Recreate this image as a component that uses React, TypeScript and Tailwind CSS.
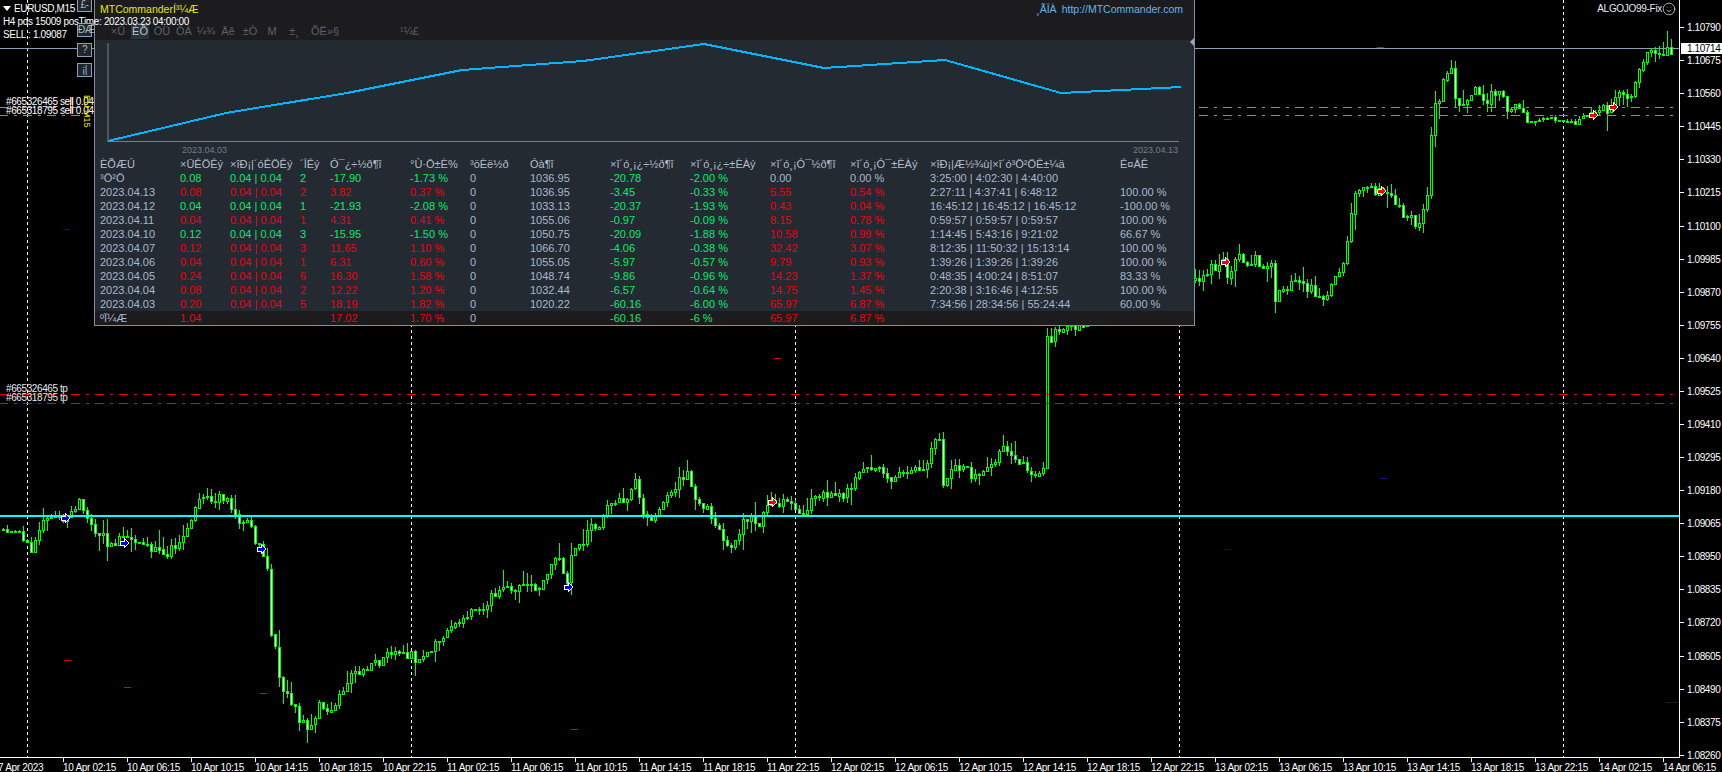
import { Smile } from "lucide-react";

type Row = {
  date: string;
  lots: string;
  minMax: string;
  count: string;
  profit: string;
  pct: string;
  cash: string;
  balance: string;
  loss: string;
  lossPct: string;
  gain: string;
  gainPct: string;
  hold: string;
  win: string;
};

const GREEN = "text-[#0ce86a]";
const RED = "text-[#f0000f]";
const GREY = "text-[#a8b8cf]";

const headers = [
  "ÈÕÆÚ",
  "×ÜÊÖÊý",
  "×îÐ¡|´óÊÖÊý",
  "´ÎÊý",
  "Ó¯¿÷½ð¶î",
  "°Ù·Ö±È%",
  "³öÈë½ð",
  "Óà¶î",
  "×î´ó¸¡¿÷½ð¶î",
  "×î´ó¸¡¿÷±ÈÀý",
  "×î´ó¸¡Ó¯½ð¶î",
  "×î´ó¸¡Ó¯±ÈÀý",
  "×îÐ¡|Æ½¾ù|×î´ó³Ö²ÖÊ±¼ä",
  "Ê¤ÂÊ",
];

const rows: Row[] = [
  { date: "³Ö²Ö", lots: "0.08", minMax: "0.04 | 0.04", count: "2", profit: "-17.90", pct: "-1.73 %", cash: "0", balance: "1036.95", loss: "-20.78", lossPct: "-2.00 %", gain: "0.00", gainPct: "0.00 %", hold: "3:25:00 | 4:02:30 | 4:40:00", win: "" },
  { date: "2023.04.13", lots: "0.08", minMax: "0.04 | 0.04", count: "2", profit: "3.82", pct: "0.37 %", cash: "0", balance: "1036.95", loss: "-3.45", lossPct: "-0.33 %", gain: "5.55", gainPct: "0.54 %", hold: "2:27:11 | 4:37:41 | 6:48:12", win: "100.00 %" },
  { date: "2023.04.12", lots: "0.04", minMax: "0.04 | 0.04", count: "1", profit: "-21.93", pct: "-2.08 %", cash: "0", balance: "1033.13", loss: "-20.37", lossPct: "-1.93 %", gain: "0.43", gainPct: "0.04 %", hold: "16:45:12 | 16:45:12 | 16:45:12", win: "-100.00 %" },
  { date: "2023.04.11", lots: "0.04", minMax: "0.04 | 0.04", count: "1", profit: "4.31", pct: "0.41 %", cash: "0", balance: "1055.06", loss: "-0.97", lossPct: "-0.09 %", gain: "8.15", gainPct: "0.78 %", hold: "0:59:57 | 0:59:57 | 0:59:57", win: "100.00 %" },
  { date: "2023.04.10", lots: "0.12", minMax: "0.04 | 0.04", count: "3", profit: "-15.95", pct: "-1.50 %", cash: "0", balance: "1050.75", loss: "-20.09", lossPct: "-1.88 %", gain: "10.58", gainPct: "0.99 %", hold: "1:14:45 | 5:43:16 | 9:21:02", win: "66.67 %" },
  { date: "2023.04.07", lots: "0.12", minMax: "0.04 | 0.04", count: "3", profit: "11.65", pct: "1.10 %", cash: "0", balance: "1066.70", loss: "-4.06", lossPct: "-0.38 %", gain: "32.42", gainPct: "3.07 %", hold: "8:12:35 | 11:50:32 | 15:13:14", win: "100.00 %" },
  { date: "2023.04.06", lots: "0.04", minMax: "0.04 | 0.04", count: "1", profit: "6.31", pct: "0.60 %", cash: "0", balance: "1055.05", loss: "-5.97", lossPct: "-0.57 %", gain: "9.79", gainPct: "0.93 %", hold: "1:39:26 | 1:39:26 | 1:39:26", win: "100.00 %" },
  { date: "2023.04.05", lots: "0.24", minMax: "0.04 | 0.04", count: "6", profit: "16.30", pct: "1.58 %", cash: "0", balance: "1048.74", loss: "-9.86", lossPct: "-0.96 %", gain: "14.23", gainPct: "1.37 %", hold: "0:48:35 | 4:00:24 | 8:51:07", win: "83.33 %" },
  { date: "2023.04.04", lots: "0.08", minMax: "0.04 | 0.04", count: "2", profit: "12.22", pct: "1.20 %", cash: "0", balance: "1032.44", loss: "-6.57", lossPct: "-0.64 %", gain: "14.75", gainPct: "1.45 %", hold: "2:20:38 | 3:16:46 | 4:12:55", win: "100.00 %" },
  { date: "2023.04.03", lots: "0.20", minMax: "0.04 | 0.04", count: "5", profit: "18.19", pct: "1.82 %", cash: "0", balance: "1020.22", loss: "-60.16", lossPct: "-6.00 %", gain: "65.97", gainPct: "6.87 %", hold: "7:34:56 | 28:34:56 | 55:24:44", win: "60.00 %" },
];

const tabs = ["×Ü", "ÈÕ", "ÖÜ", "ÔÂ", "¼¾", "Äê", "±Ò", "M", "±¸"];

const prices = [
  "1.10790", "1.10675", "1.10560", "1.10445", "1.10330", "1.10215", "1.10100", "1.09985",
  "1.09870", "1.09755", "1.09640", "1.09525", "1.09410", "1.09295", "1.09180", "1.09065",
  "1.08950", "1.08835", "1.08720", "1.08605", "1.08490", "1.08375", "1.08260",
];

const times = [
  "10 Apr 02:15", "10 Apr 06:15", "10 Apr 10:15", "10 Apr 14:15", "10 Apr 18:15", "10 Apr 22:15",
  "11 Apr 02:15", "11 Apr 06:15", "11 Apr 10:15", "11 Apr 14:15", "11 Apr 18:15", "11 Apr 22:15",
  "12 Apr 02:15", "12 Apr 06:15", "12 Apr 10:15", "12 Apr 14:15", "12 Apr 18:15", "12 Apr 22:15",
  "13 Apr 02:15", "13 Apr 06:15", "13 Apr 10:15", "13 Apr 14:15", "13 Apr 18:15", "13 Apr 22:15",
  "14 Apr 02:15", "14 Apr 06:15",
];

// rough trace of the price, read off the reference
const trace: [number, number][] = [
  [0, 530], [20, 532], [23, 540], [30, 550], [38, 537], [43, 517], [66, 516], [72, 508], [80, 503], [85, 517],
  [90, 525], [100, 535], [110, 545], [120, 535], [130, 540], [150, 547], [163, 557], [180, 540], [190, 520],
  [200, 493], [215, 500], [225, 497], [232, 505], [237, 520], [250, 516], [252, 535], [262, 550], [267, 573],
  [270, 630], [275, 650], [280, 688], [292, 703], [300, 720], [307, 727], [312, 722], [320, 703], [330, 712],
  [340, 690], [353, 673], [370, 668], [380, 660], [390, 652], [400, 652], [410, 655], [420, 660], [428, 650],
  [440, 640], [450, 632], [460, 617], [468, 613], [487, 607], [491, 593], [510, 587], [525, 588], [541, 588],
  [544, 580], [552, 563], [560, 557], [564, 577], [567, 587], [571, 560], [575, 550], [583, 540], [590, 527],
  [600, 523], [608, 503], [617, 500], [625, 500], [633, 480], [636, 483], [640, 497], [644, 513], [652, 520],
  [659, 510], [671, 493], [682, 475], [688, 473], [692, 492], [696, 503], [709, 510], [719, 530], [726, 543],
  [732, 548], [740, 537], [743, 520], [751, 520], [759, 523], [763, 513], [768, 503], [782, 502], [791, 504],
  [795, 512], [807, 512], [812, 497], [820, 493], [839, 495], [851, 490], [856, 477], [874, 467], [881, 470],
  [889, 483], [895, 480], [900, 470], [920, 465], [927, 463], [935, 443], [940, 442], [943, 487], [950, 470],
  [962, 467], [975, 477], [985, 470], [1005, 448], [1017, 455], [1027, 473], [1040, 476], [1045, 470],
  [1047, 340], [1060, 330], [1090, 320], [1130, 290], [1190, 280], [1197, 278], [1203, 275], [1213, 267],
  [1223, 263], [1227, 273], [1235, 260], [1240, 250], [1243, 263], [1253, 258], [1263, 263], [1272, 267],
  [1275, 297], [1280, 293], [1287, 288], [1292, 278], [1300, 282], [1307, 287], [1317, 293], [1320, 300],
  [1327, 293], [1345, 258], [1355, 190], [1381, 190], [1396, 205], [1416, 225], [1426, 205], [1430, 163], [1432, 113],
  [1439, 100], [1445, 68], [1451, 67], [1454, 100], [1461, 113], [1473, 88], [1484, 103], [1490, 95],
  [1498, 88], [1506, 107], [1520, 107], [1525, 123], [1543, 117], [1564, 120], [1576, 123], [1582, 115],
  [1613, 107], [1617, 93], [1631, 97], [1633, 80], [1641, 72], [1645, 57], [1648, 50], [1662, 58], [1668, 50],
];

function priceAt(x: number) {
  for (let i = 1; i < trace.length; i++) {
    if (x <= trace[i][0]) {
      const [x0, y0] = trace[i - 1];
      const [x1, y1] = trace[i];
      return y0 + ((y1 - y0) * (x - x0)) / (x1 - x0);
    }
  }
  return trace[trace.length - 1][1];
}

let seed = 1337;
function rnd() {
  seed = (seed * 16807) % 2147483647;
  return seed / 2147483647;
}

type Candle = { x: number; open: number; close: number; high: number; low: number };

const candles: Candle[] = [];
let last = priceAt(0);
for (let i = 0; i < 418; i++) {
  const x = 3 + i * 4;
  // the two flat stretches barely move
  const calm = x < 22 || (x > 1525 && x < 1600);
  const close = priceAt(x) + (rnd() - 0.5) * (calm ? 3 : 10);
  const high = Math.min(last, close) - rnd() * rnd() * (calm ? 6 : 18);
  const low = Math.max(last, close) + rnd() * rnd() * (calm ? 6 : 18);
  candles.push({ x, open: last, close, high, low });
  last = close;
}

const blueMarks = [[65, 518], [124, 543], [261, 549], [568, 587]];
const redMarks = [[772, 502], [1225, 262], [1381, 191], [1593, 115], [1613, 107]];
const redDashes = [[64, 660], [124, 687], [260, 693], [774, 358], [571, 729], [1377, 47], [1224, 119]];
const blueDashes = [[63, 229], [1380, 478], [1224, 549]];
const separators = [27, 411, 795, 1179, 1563];

const Marker = ({ x, y, color }: { x: number; y: number; color: string }) => (
  <polygon
    points={`${x - 4},${y - 2} ${x},${y - 2} ${x},${y - 5} ${x + 5},${y} ${x},${y + 5} ${x},${y + 2} ${x - 4},${y + 2}`}
    fill={color}
    stroke="white"
    strokeWidth="1"
  />
);

const ChartDrawing = () => (
  <svg width="1679" height="757" className="block" shapeRendering="crispEdges">
    {separators.map((x) => (
      <line key={x} x1={x + 0.5} x2={x + 0.5} y1="0" y2="757" stroke="white" strokeDasharray="3 3" />
    ))}
    <line x1="0" x2="1679" y1="48.5" y2="48.5" stroke="#8d9db3" />
    {candles.map((c) => {
      const top = Math.round(Math.min(c.open, c.close));
      const h = Math.max(1, Math.round(Math.abs(c.open - c.close)));
      const down = c.close > c.open;
      return (
        <g key={c.x}>
          <rect x={c.x} y={Math.round(c.high)} width="1" height={Math.max(1, Math.round(c.low - c.high))} fill="#00ff00" />
          <rect x={c.x - 1} y={top} width="3" height={h + 1} fill="#00ff00" />
          {h > 1 && <rect x={c.x} y={top + 1} width="1" height={h - 1} fill={down ? "white" : "black"} />}
        </g>
      );
    })}
    <line x1="0" x2="1679" y1="516" y2="516" stroke="#00ffff" strokeWidth="2" />
    <line x1="0" x2="1673" y1="107.5" y2="107.5" stroke="#32c832" strokeDasharray="9 6 3 6" strokeDashoffset="1" />
    <line x1="0" x2="1673" y1="115.5" y2="115.5" stroke="#32c832" strokeDasharray="9 6 3 6" strokeDashoffset="1" />
    <line x1="0" x2="1673" y1="394.5" y2="394.5" stroke="#f00000" strokeDasharray="9 6 3 6" strokeDashoffset="1" />
    <line x1="0" x2="1673" y1="403.5" y2="403.5" stroke="#f00000" strokeDasharray="9 6 3 6" strokeDashoffset="1" />
    {redDashes.map(([x, y]) => (
      <rect key={x} x={x} y={y} width="7" height="1" fill="#e00000" />
    ))}
    {blueDashes.map(([x, y]) => (
      <rect key={x} x={x} y={y} width="7" height="1" fill="#10107a" />
    ))}
    <rect x="1666" y="702" width="12" height="1" fill="#1c1c1c" />
    <rect x="70" y="97" width="1" height="16" fill="#c98a2a" />
    <rect x="72" y="97" width="1" height="16" fill="#c98a2a" />
    {blueMarks.map(([x, y]) => (
      <Marker key={x} x={x} y={y} color="#0000e6" />
    ))}
    {redMarks.map(([x, y]) => (
      <Marker key={x} x={x} y={y} color="#f00000" />
    ))}
  </svg>
);

const SideButton = ({ label, className }: { label: string; className: string }) => (
  <div
    className={`w-[15px] h-[14px] border border-[#8ea0b5] bg-[#20262d] text-[#b0b8c2] text-[10px] tracking-[-0.5px] leading-[12px] text-center ${className}`}
  >
    {label}
  </div>
);

const StatsPanel = () => (
  <div className="absolute left-[94px] top-0 w-[1101px] h-[326px] flex flex-col bg-[#232a32] border border-t-0 border-[#7f8fa6]">
    <div className="h-[40px] shrink-0 bg-[#1c1c1e] relative">
      <div className="flex justify-between pl-[5px] pr-[11px] pt-[3px] h-[18px] leading-[13px]">
        <span className="text-[#e6e600] text-[10.5px]">MTCommanderÍ³¼Æ</span>
        <span className="text-[#6db1e6] text-[10.5px] flex gap-[5px]">
          <span>¸ÃÎÀ</span>
          <span>http://MTCommander.com</span>
        </span>
      </div>
      <div className="flex items-center pl-[12px] h-[14px] mt-[6px] text-[11px] text-[#5b626b]">
        {tabs.map((t) => (
          <div key={t} className="w-[22px] flex justify-center">
            <span className={t === "ÈÕ" ? "w-[18px] text-center bg-[#2a323c] text-[#b8c2ce]" : ""}>{t}</span>
          </div>
        ))}
        <span className="ml-[6px] w-[89px]">ÕË»§</span>
        <span>¹¼£</span>
      </div>
      <div className="absolute right-0 top-[38px] w-0 h-0 border-y-[4px] border-y-transparent border-r-[4px] border-r-[#9aa6b4]" />
    </div>
    <svg width="1099" height="103" className="block shrink-0">
      <line x1="13" x2="13" y1="3" y2="102" stroke="#7a7f85" />
      <line x1="13" x2="1084" y1="101.5" y2="101.5" stroke="#7a7f85" />
      <polyline
        points="13,101 131,73 252,53 367,30 488,21 609,4 729,28 850,20 966,53 1086,47"
        fill="none"
        stroke="#00b7ff"
        strokeWidth="2"
        shapeRendering="crispEdges"
      />
    </svg>
    <div className="flex justify-between pl-[87px] pr-[16px] h-[14px] leading-[14px] text-[9px] text-[#757d86] shrink-0">
      <span>2023.04.03</span>
      <span>2023.04.13</span>
    </div>
    <div className="text-[11px] leading-[14px] pl-[5px]">
      <div className="grid grid-cols-[80px_50px_70px_30px_80px_60px_60px_80px_80px_80px_80px_80px_190px_1fr] text-[#b4bfcc]">
        {headers.map((h) => (
          <span key={h} className="whitespace-nowrap">
            {h}
          </span>
        ))}
      </div>
      {rows.map((r) => {
        const main = r.profit.startsWith("-") ? GREEN : RED;
        const gain = r.gain === "0.00" ? GREY : RED;
        return (
          <div
            key={r.date}
            className="grid grid-cols-[80px_50px_70px_30px_80px_60px_60px_80px_80px_80px_80px_80px_190px_1fr] h-[14px]"
          >
            <span className={GREY}>{r.date}</span>
            <span className={main}>{r.lots}</span>
            <span className={main}>{r.minMax}</span>
            <span className={main}>{r.count}</span>
            <span className={main}>{r.profit}</span>
            <span className={main}>{r.pct}</span>
            <span className={GREY}>{r.cash}</span>
            <span className={GREY}>{r.balance}</span>
            <span className={GREEN}>{r.loss}</span>
            <span className={GREEN}>{r.lossPct}</span>
            <span className={gain}>{r.gain}</span>
            <span className={gain}>{r.gainPct}</span>
            <span className={`${GREY} whitespace-nowrap`}>{r.hold}</span>
            <span className={`${GREY} whitespace-nowrap`}>{r.win}</span>
          </div>
        );
      })}
    </div>
    <div className="flex-1 bg-[#1c1c1e] text-[11px] leading-[14px] pl-[5px] grid grid-cols-[80px_50px_70px_30px_80px_60px_60px_80px_80px_80px_80px_80px_190px_1fr]">
      <span className={GREY}>ºÏ¼Æ</span>
      <span className={RED}>1.04</span>
      <span />
      <span />
      <span className={RED}>17.02</span>
      <span className={RED}>1.70 %</span>
      <span className={GREY}>0</span>
      <span />
      <span className={GREEN}>-60.16</span>
      <span className={GREEN}>-6 %</span>
      <span className={RED}>65.97</span>
      <span className={RED}>6.87 %</span>
    </div>
  </div>
);

export default function App() {
  return (
    <div className="w-[1722px] h-[772px] bg-black overflow-hidden flex flex-col font-['Liberation_Sans',sans-serif]">
      <div className="flex h-[757px]">
        <div className="relative w-[1679px] shrink-0">
          <ChartDrawing />

          <div className="absolute left-[6px] top-[96px] text-white text-[10px] tracking-[-0.4px] leading-[9px] whitespace-nowrap">
            <div className="h-[9px] leading-[12px]">#665326465 sell 0.04</div>
            <div className="h-[9px] leading-[12px]">#665318795 sell 0.04</div>
          </div>
          <div className="absolute left-[82px] top-[95px] text-[#e6e600] text-[9px] leading-[10px] [writing-mode:vertical-rl]">
            EU M15
          </div>
          <div className="absolute left-[6px] top-[383px] text-[#e4e8ec] text-[10px] tracking-[-0.4px] leading-[9px] whitespace-nowrap">
            <div className="h-[9px] leading-[12px]">#665326465 tp</div>
            <div className="h-[9px] leading-[12px]">#665318795 tp</div>
          </div>

          <StatsPanel />

          <div className="absolute left-[3px] top-0 text-white text-[10px] tracking-[-0.35px] leading-[13px] whitespace-nowrap pt-[2px]">
            <div className="flex items-center gap-[3px]">
              <span className="w-0 h-0 border-x-[4px] border-x-transparent border-t-[5px] border-t-white" />
              <span>EURUSD,M15</span>
            </div>
            <div>H4 pds 15009 posTime: 2023.03.23 04:00:00</div>
            <div>SELL : 1.09087</div>
          </div>

          <div className="absolute left-[77px] top-[-2px] flex flex-col">
            <SideButton label="£-" className="" />
            <SideButton label="ÐÆ" className="mt-[11px]" />
            <SideButton label="?" className="mt-[6px]" />
            <SideButton label="¡|" className="mt-[6px]" />
          </div>

          <div className="absolute right-[3px] top-[2px] flex items-center text-[#e4e8ec] text-[10px] tracking-[-0.3px] leading-[14px]">
            <span>ALGOJO99-Fix</span>
            <Smile size={14} strokeWidth={1.25} />
          </div>
        </div>

        <div className="relative flex-1 border-l border-white pt-[11px] text-white text-[10px] tracking-[-0.4px]">
          {prices.map((p) => (
            <div key={p} className="h-[33.09px] flex items-center gap-[3px]">
              <span className="w-[4px] h-px bg-white" />
              <span>{p}</span>
            </div>
          ))}
          <div className="absolute left-[1px] top-[43px] w-[42px] h-[11px] bg-white text-black leading-[11px] pl-[6px]">1.10714</div>
        </div>
      </div>

      <div className="flex-1 border-t border-white flex text-white text-[10px] leading-[19px] tracking-[-0.3px] whitespace-nowrap w-[1680px]">
        <div className="w-[63px] shrink-0 overflow-hidden">
          <span className="-ml-[2px] block">7 Apr 2023</span>
        </div>
        {times.map((t) => (
          <div key={t} className="w-[64px] shrink-0 relative">
            <span className="absolute left-0 top-0 w-px h-[4px] bg-white" />
            {t}
          </div>
        ))}
      </div>
    </div>
  );
}
